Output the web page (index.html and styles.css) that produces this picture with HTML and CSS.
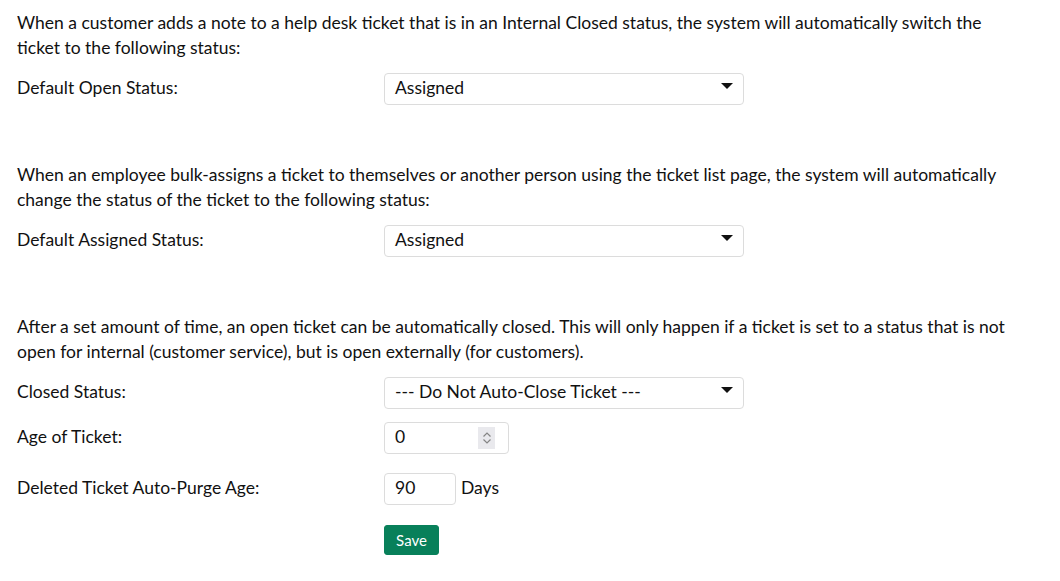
FILE: index.html
```html
<!DOCTYPE html>
<html>
<head>
<meta charset="utf-8">
<link rel="stylesheet" href="styles.css">
</head>
<body>
<div class="page">
  <section class="section first">
    <p class="desc">When a customer adds a note to a help desk ticket that is in an Internal Closed status, the system will automatically switch the ticket to the following status:</p>
    <div class="row">
      <label class="label">Default Open Status:</label>
      <div class="select"><span>Assigned</span><span class="caret"></span></div>
    </div>
  </section>
  <section class="section">
    <p class="desc">When an employee bulk-assigns a ticket to themselves or another person using the ticket list page, the system will automatically change the status of the ticket to the following status:</p>
    <div class="row">
      <label class="label">Default Assigned Status:</label>
      <div class="select"><span>Assigned</span><span class="caret"></span></div>
    </div>
  </section>
  <section class="section last">
    <p class="desc">After a set amount of time, an open ticket can be automatically closed. This will only happen if a ticket is set to a status that is not open for internal (customer service), but is open externally (for customers).</p>
    <div class="row">
      <label class="label">Closed Status:</label>
      <div class="select"><span>--- Do Not Auto-Close Ticket ---</span><span class="caret"></span></div>
    </div>
    <div class="row age">
      <label class="label">Age of Ticket:</label>
      <div class="input number"><span>0</span>
        <span class="spin"><svg width="12" height="18" viewBox="0 0 12 18"><path d="M2.5 7.5 L6 4 L9.5 7.5" fill="none" stroke="#858585" stroke-width="1.2"/><path d="M2.5 10.5 L6 14 L9.5 10.5" fill="none" stroke="#858585" stroke-width="1.2"/></svg></span>
      </div>
    </div>
    <div class="row purge">
      <label class="label">Deleted Ticket Auto-Purge Age:</label>
      <div class="input small"><span>90</span></div>
      <span class="unit">Days</span>
    </div>
    <div class="row actions">
      <span class="label"></span>
      <button class="btn">Save</button>
    </div>
  </section>
</div>
</body>
</html>
```

FILE: styles.css
```css
* { box-sizing: border-box; }
html, body { margin: 0; padding: 0; background: #fff; }
body {
  font-family: Lato, "Open Sans", sans-serif;
  font-size: 17.5px;
  color: #111;
}
.page { padding: 10px 17px 0 17px; }
.section { margin-bottom: 57px; }
.section.last { margin-bottom: 0; }
.desc { margin: 0 0 13px 0; line-height: 25px; max-width: 1010px; }
.row { display: flex; align-items: center; }
.label { width: 367px; flex: none; padding-bottom: 4px; }
.select {
  width: 360px; height: 32px;
  border: 1px solid #dcdcdc; border-radius: 4px;
  display: flex; align-items: center; justify-content: space-between;
  padding: 0 10px 3px 10px;
}
.caret {
  width: 0; height: 0;
  border-left: 6px solid transparent;
  border-right: 6px solid transparent;
  border-top: 6px solid #111;
  margin-top: -4px;
}
.input {
  height: 32px;
  border: 1px solid #dcdcdc; border-radius: 4px;
  display: flex; align-items: center;
  padding: 0 10px 3px 10px;
  position: relative;
}
.number { width: 125px; }
.small { width: 72px; }
.spin {
  position: absolute; right: 13px; top: 4px;
  width: 17px; height: 22px;
  background: #e9e9ed;
  display: flex; align-items: center; justify-content: center;
}
.row.age { margin-top: 13px; }
.row.purge { margin-top: 19px; }
.unit { margin-left: 5px; padding-bottom: 3px; }
.row.actions { margin-top: 20px; }
.btn {
  font-family: Lato, sans-serif;
  font-size: 15px;
  color: #fff;
  background: #08805a;
  border: 1px solid #08805a;
  border-radius: 3px;
  height: 30px;
  width: 55px;
  padding: 0;
}
```
